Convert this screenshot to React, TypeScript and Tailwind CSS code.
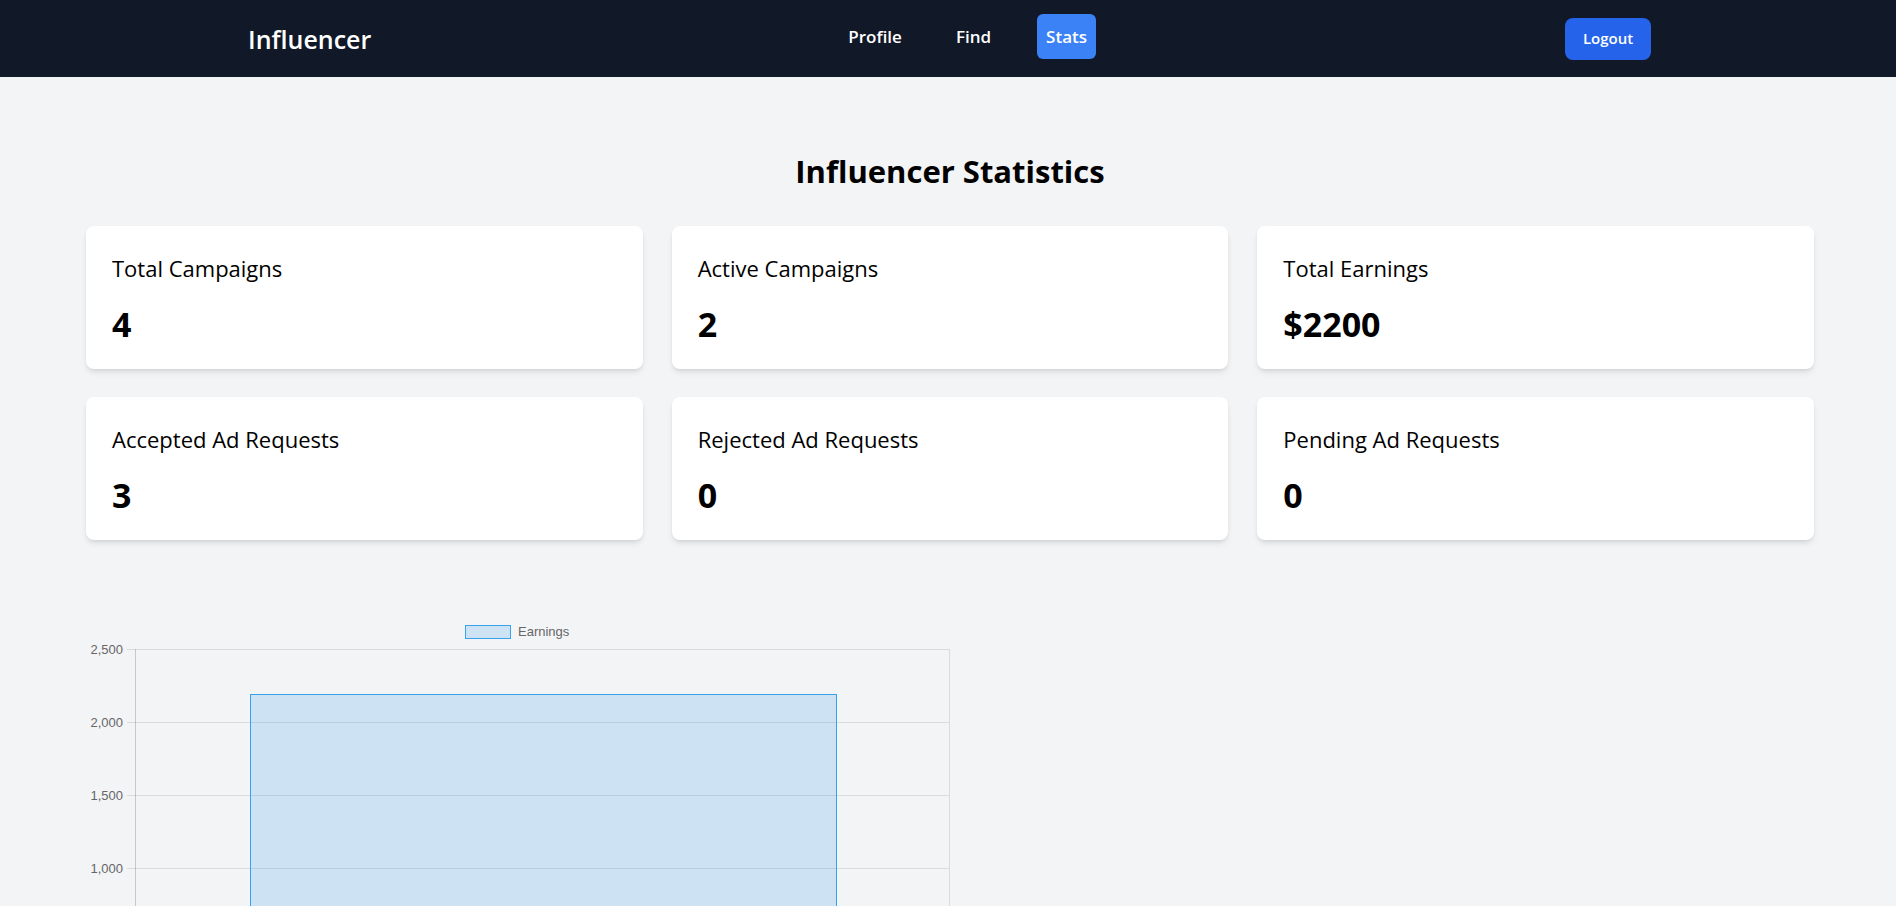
import React from "react";

const stats = [
  { label: "Total Campaigns", value: "4" },
  { label: "Active Campaigns", value: "2" },
  { label: "Total Earnings", value: "$2200" },
  { label: "Accepted Ad Requests", value: "3" },
  { label: "Rejected Ad Requests", value: "0" },
  { label: "Pending Ad Requests", value: "0" },
];

function Chart() {
  // canvas-local coords; canvas origin at page (86, 614)
  const ox = 86;
  const oy = 614;
  const L = 135 - ox; // plot left
  const R = 949 - ox; // plot right
  const ticks = [2500, 2000, 1500, 1000, 500, 0];
  const yOf = (v: number) => 648 - oy + ((2500 - v) / 500) * 73;
  const fmt = (v: number) => v.toLocaleString("en-US");
  return (
    <svg width={864} height={432} viewBox="0 0 864 432" className="block">
      <rect x={465 - ox + 0.5} y={624 - oy + 0.5} width={45} height={13} fill="rgba(54,162,235,0.2)" stroke="rgb(54,162,235)" strokeWidth={1} />
      <text x={518 - ox} y={635 - oy} fontSize={13} fill="#666" fontFamily="'Liberation Sans', Arial, sans-serif">
        Earnings
      </text>
      {ticks.map((t) => (
        <g key={t}>
          <line x1={L - 8} x2={R} y1={yOf(t) + 0.5} y2={yOf(t) + 0.5} stroke="rgba(0,0,0,0.1)" strokeWidth={1} />
          <text x={123 - ox} y={yOf(t) + 4.5} fontSize={13} fill="#666" textAnchor="end" fontFamily="'Liberation Sans', Arial, sans-serif">
            {fmt(t)}
          </text>
        </g>
      ))}
      <line x1={L + 0.5} x2={L + 0.5} y1={yOf(2500)} y2={yOf(0) + 8} stroke="rgba(0,0,0,0.18)" strokeWidth={1} />
      <line x1={R + 0.5} x2={R + 0.5} y1={yOf(2500)} y2={yOf(0) + 8} stroke="rgba(0,0,0,0.1)" strokeWidth={1} />
      <rect x={250 - ox + 0.5} y={693 - oy + 0.5} width={586} height={yOf(0) - (693 - oy)} fill="rgba(54,162,235,0.2)" stroke="rgb(54,162,235)" strokeWidth={1} />
      <text x={(L + R) / 2} y={yOf(0) + 22} fontSize={13} fill="#666" textAnchor="middle" fontFamily="'Liberation Sans', Arial, sans-serif">
        Total Earnings
      </text>
    </svg>
  );
}

export default function App() {
  return (
    <div className="min-h-screen bg-[#f3f4f6] font-['Open_Sans',sans-serif] text-black">
      <nav className="h-[77px] bg-[#111827] flex items-center justify-between pl-[248px] pr-[245px]">
        <div className="text-white text-[25px] font-semibold leading-[34px]">Influencer</div>
        <div className="flex items-center gap-[38px] mb-[4px]">
          <a className="px-2 py-2 text-white text-[17px] font-semibold leading-[29px]">Profile</a>
          <a className="px-2 py-2 text-white text-[17px] font-semibold leading-[29px]">Find</a>
          <a className="px-[9px] py-2 text-white text-[17px] font-semibold leading-[29px] rounded-md bg-[#3b82f6]">Stats</a>
        </div>
        <button className="w-[86px] h-[42px] rounded-lg bg-[#2563eb] text-white text-[15px] font-semibold">Logout</button>
      </nav>
      <main className="pl-[86px] pr-[82px] pt-[72px]">
        <h1 className="text-center text-[31px] font-bold leading-[44px] mb-[33px]">Influencer Statistics</h1>
        <div className="grid grid-cols-3 gap-x-[29px] gap-y-[28px]">
          {stats.map((s) => (
            <div key={s.label} className="bg-white rounded-lg shadow-md h-[143px] px-[26px] pt-[27px]">
              <div className="text-[22px] leading-[30px]">{s.label}</div>
              <div className="mt-[19px] text-[34px] font-bold leading-[44px]">{s.value}</div>
            </div>
          ))}
        </div>
        <div className="mt-[75px] w-[864px]">
          <Chart />
        </div>
      </main>
    </div>
  );
}
